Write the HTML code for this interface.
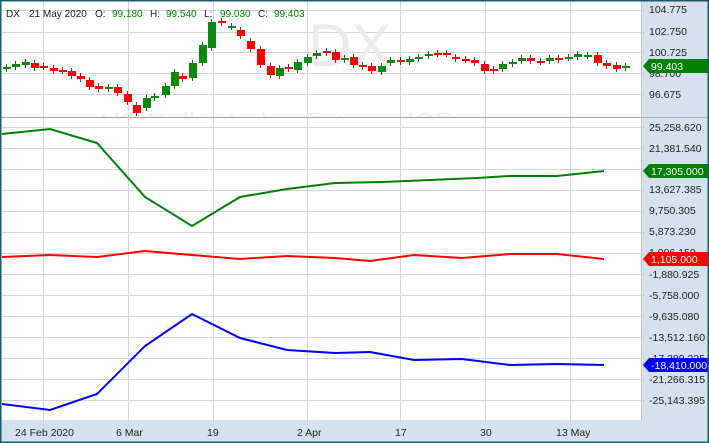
<!DOCTYPE html>
<html><head><meta charset="utf-8"><style>
html,body{margin:0;padding:0;background:#fff;}
svg{display:block;font-family:"Liberation Sans",sans-serif;}
</style></head><body>
<svg id="s" width="709" height="443" viewBox="0 0 709 443" xmlns="http://www.w3.org/2000/svg">
<rect x="0" y="0" width="709" height="443" fill="#fff"/>
<rect x="641" y="0" width="68" height="443" fill="#d6e1ee"/>
<rect x="0" y="420" width="709" height="23" fill="#d6e1ee"/>
<line x1="641.5" y1="0" x2="641.5" y2="420" stroke="#c0c0c0"/>
<g id="grid" stroke="#d4d4d4" stroke-width="1"></g>
<text x="308" y="66" font-size="60" fill="#ebebeb">DX</text>
<text x="100" y="132" font-size="28" fill="#f3f3f3">US Dollar Index Futures ICE</text>
<rect x="0" y="118" width="641" height="16" fill="#fff"/>
<line x1="0" y1="117.5" x2="641" y2="117.5" stroke="#a8a8a8"/>
<line x1="641" y1="117.5" x2="709" y2="117.5" stroke="#a8b4c4"/>
<g id="grid2" stroke="#d4d4d4" stroke-width="1"></g>
<g id="candles"></g>
<polyline fill="none" stroke="#008000" stroke-width="2" points="2,134 50,129 97,143 145,197 192,226 240,197 287,189 335,183 382,182 430,180 477,178 510,176 557,176 604,171"/>
<polyline fill="none" stroke="#ff0000" stroke-width="2" points="2,257 50,255 97,257 145,251 192,255 240,259 287,256 335,258 370,261 414,255 462,258 510,254 557,254 604,259"/>
<polyline fill="none" stroke="#0000ff" stroke-width="2" points="2,404 50,410 97,394 145,346 192,314 240,338 287,350 335,353 370,352 414,360 462,359 510,365 557,364 604,365"/>
<g font-size="10.5" fill="#222">
<text x="649" y="13">104.775</text><text x="649" y="35">102.750</text><text x="649" y="56">100.725</text><text x="649" y="77">98.700</text><text x="649" y="98">96.675</text>
<text x="649" y="131">25,258.620</text><text x="649" y="152">21,381.540</text><text x="649" y="193">13,627.385</text><text x="649" y="214">9,750.305</text><text x="649" y="235">5,873.230</text><text x="649" y="256">1,996.150</text><text x="649" y="278">-1,880.925</text><text x="649" y="299">-5,758.000</text><text x="649" y="320">-9,635.080</text><text x="649" y="341">-13,512.160</text><text x="649" y="362">-17,389.235</text><text x="649" y="383">-21,266.315</text><text x="649" y="404">-25,143.395</text>
<text x="15" y="436">24 Feb 2020</text><text x="116" y="436">6 Mar</text><text x="207" y="436">19</text><text x="297" y="436">2 Apr</text><text x="395" y="436">17</text><text x="480" y="436">30</text><text x="556" y="436">13 May</text>
</g>
<polygon points="643,66 649,59 709,59 709,73 649,73" fill="#008000"/><text x="651" y="70" font-size="10.5" fill="#fff">99.403</text>
<polygon points="643,171 649,164 709,164 709,178 649,178" fill="#008000"/><text x="651" y="175" font-size="10.5" fill="#fff">17,305.000</text>
<polygon points="643,259 649,252 709,252 709,266 649,266" fill="#ff0000"/><text x="651" y="263" font-size="10.5" fill="#fff">1,105.000</text>
<polygon points="643,365 649,358 709,358 709,372 649,372" fill="#0000ff"/><text x="651" y="369" font-size="10.5" fill="#fff">-18,410.000</text>
<g font-size="10" fill="#222">
<text x="6" y="17">DX</text><text x="29" y="17">21 May 2020</text>
<text x="95" y="17">O:</text><text x="112" y="17" fill="#008000">99.180</text>
<text x="150" y="17">H:</text><text x="166" y="17" fill="#008000">99.540</text>
<text x="204" y="17">L:</text><text x="220" y="17" fill="#008000">99.030</text>
<text x="258" y="17">C:</text><text x="274" y="17" fill="#008000">99.403</text>
</g>
<rect x="0.5" y="0.5" width="708" height="442" fill="none" stroke="#1d5a6e" stroke-width="2"/>
</svg>
<script>
var NS="http://www.w3.org/2000/svg",g=document.getElementById('grid'),g2=document.getElementById('grid2'),c=document.getElementById('candles');
function el(p,t,a){var e=document.createElementNS(NS,t);for(var k in a)e.setAttribute(k,a[k]);p.appendChild(e);return e;}
[43,128,213,307,400,485,570].forEach(function(x){el(g,'line',{x1:x+.5,y1:0,x2:x+.5,y2:425});el(g2,'line',{x1:x+.5,y1:118,x2:x+.5,y2:134});});
[10,32,52,73,94,127,148,169,190,211,232,253,274,295,316,337,358,379,400].forEach(function(y){el(g,'line',{x1:0,y1:y+.5,x2:645,y2:y+.5});});
el(g2,'line',{x1:0,y1:127.5,x2:645,y2:127.5});
var d=[[6,67,69,1],[15,64,67,1],[25,62,65,1],[34,63,68,0],[43,66,67,0],[53,68,71,0],[62,70,71,0],[71,71,76,0],[80,76,79,0],[89,80,87,0],[98,86,89,0],[108,87,89,1],[117,87,93,0],[127,94,102,0],[136,105,113,0],[146,98,108,1],[154,96,98,1],[165,86,95,1],[174,72,86,1],[182,76,79,0],[192,63,78,1],[202,45,63,1],[211,22,48,1],[221,21,23,0],[231,26,27,1],[240,30,36,0],[250,41,49,0],[260,49,65,0],[270,66,75,0],[279,68,76,1],[288,67,69,0],[297,62,70,1],[307,57,63,1],[316,53,56,1],[326,51,53,0],[335,52,60,0],[344,58,60,1],[353,57,65,0],[362,65,67,0],[371,66,71,0],[381,66,72,1],[390,60,63,1],[400,60,62,0],[409,59,62,1],[418,57,59,1],[428,54,56,1],[437,53,54,0],[446,53,54,0],[455,57,59,0],[465,59,60,0],[474,60,63,0],[484,64,71,0],[493,69,71,0],[502,64,69,1],[512,62,64,1],[521,58,61,1],[530,58,61,0],[540,61,62,0],[549,58,61,1],[558,58,60,0],[568,57,58,1],[577,54,57,1],[587,55,56,1],[597,55,63,0],[606,63,66,0],[616,65,69,0],[625,66,68,1]];
d.forEach(function(k){var col=k[3]?'#0a8a0a':'#ff0000';el(c,'line',{x1:k[0]+.5,y1:k[1]-3,x2:k[0]+.5,y2:k[2]+3,stroke:'#444','stroke-width':1});el(c,'rect',{x:k[0]-3,y:k[1],width:8,height:Math.max(2,k[2]-k[1]),fill:col});});
</script>
</body></html>
